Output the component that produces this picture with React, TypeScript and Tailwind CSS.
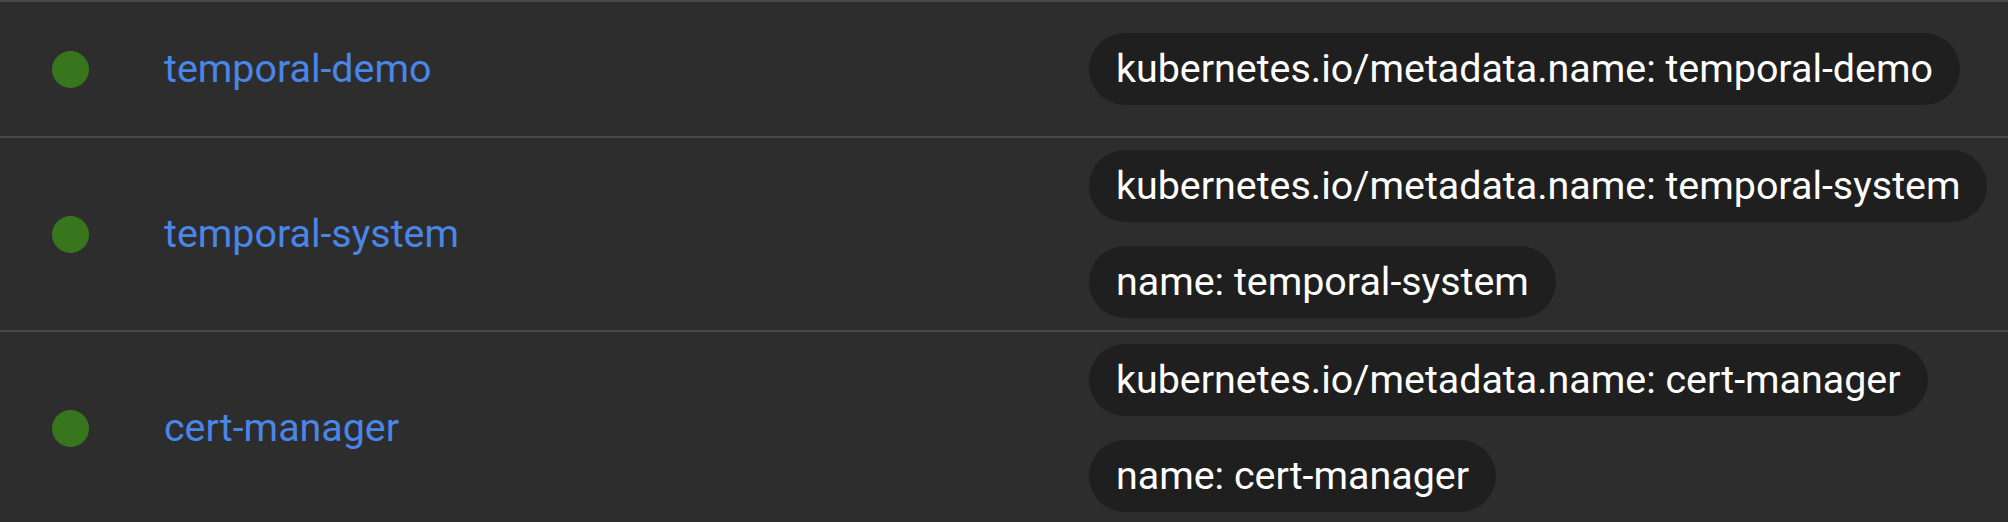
type Namespace = {
  name: string;
  labels: string[];
};

const namespaces: Namespace[] = [
  {
    name: "temporal-demo",
    labels: ["kubernetes.io/metadata.name: temporal-demo"],
  },
  {
    name: "temporal-system",
    labels: ["kubernetes.io/metadata.name: temporal-system", "name: temporal-system"],
  },
  {
    name: "cert-manager",
    labels: ["kubernetes.io/metadata.name: cert-manager", "name: cert-manager"],
  },
];

function StatusDot() {
  return <span className="block w-[37px] h-[37px] rounded-full bg-[#38761d]" />;
}

function LabelChip({ text }: { text: string }) {
  return (
    <span className="flex items-center h-[72px] px-[27px] rounded-full bg-[#1f1f1f] text-white whitespace-nowrap">
      {text}
    </span>
  );
}

export default function App() {
  return (
    <div
      className="min-h-screen bg-[#2d2d2d] text-[39.4px] leading-normal"
      style={{ fontFamily: "Roboto, 'Liberation Sans', sans-serif" }}
    >
      <div className="border-t-2 border-[#474747]">
        {namespaces.map((ns) => (
          <div
            key={ns.name}
            className="flex items-center min-h-[136px] py-3 border-b-2 border-[#474747]"
          >
            {/* Status */}
            <div className="w-[164px] shrink-0 pl-[52px]">
              <StatusDot />
            </div>

            {/* Name */}
            <div className="w-[925px] shrink-0">
              <a href="#" className="text-[#4a86e8]">
                {ns.name}
              </a>
            </div>

            {/* Labels */}
            <div className="flex flex-col items-start gap-6">
              {ns.labels.map((label) => (
                <LabelChip key={label} text={label} />
              ))}
            </div>
          </div>
        ))}
      </div>
    </div>
  );
}
